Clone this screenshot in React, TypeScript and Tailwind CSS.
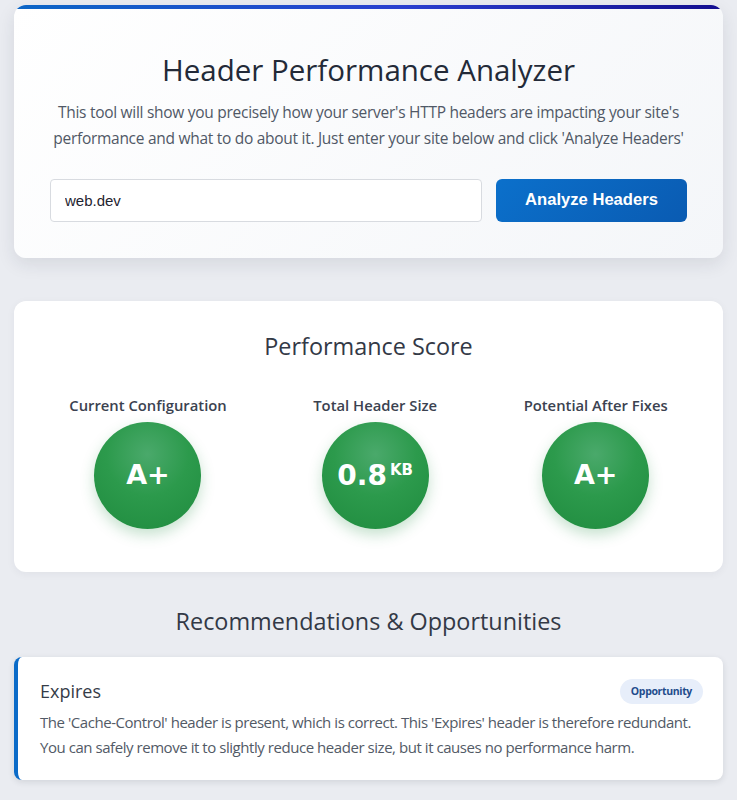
function Circle({ children }: { children: React.ReactNode }) {
  return (
    <div className="flex h-[107px] w-[107px] items-center justify-center rounded-full bg-[radial-gradient(circle_at_50%_30%,#4aa96b_0%,#2c9a4c_45%,#1f8b3e_100%)] shadow-[0_6px_14px_rgba(31,139,62,0.25)]">
      {children}
    </div>
  );
}

function Metric({ label, children }: { label: string; children: React.ReactNode }) {
  return (
    <div className="flex flex-col items-center gap-[7px]">
      <div className="text-[14.8px] font-semibold leading-[20px] text-[#3b4250]">{label}</div>
      <Circle>{children}</Circle>
    </div>
  );
}

export default function App() {
  return (
    <div className="min-h-[800px] bg-[#eaecf1] px-[14px] pt-[5px] pb-[20px] font-['Open_Sans',sans-serif]">
      {/* Analyzer card */}
      <div className="overflow-hidden rounded-[12px] bg-[linear-gradient(135deg,#ffffff_0%,#f4f6f9_100%)] shadow-[0_6px_18px_rgba(30,40,60,0.10)]">
        <div className="h-[4px] bg-[linear-gradient(90deg,#0b66c6_0%,#2a3fcf_55%,#120d8f_100%)]" />
        <div className="px-[36px] pt-[42px] pb-[36px]">
          <h1 className="text-center text-[29.5px] font-normal leading-[38px] text-[#232a38]">Header Performance Analyzer</h1>
          <p className="mt-[10px] text-center text-[15.5px] leading-[26px] tracking-[-0.28px] text-[#505866]">
            This tool will show you precisely how your server's HTTP headers are impacting your site's performance and what to do about it. Just enter your site below and click 'Analyze Headers'
          </p>
          <div className="mt-[28px] flex gap-[14px]">
            <input
              defaultValue="web.dev"
              className="h-[43px] flex-1 rounded-[4px] border border-[#d8dbe0] bg-white px-[14px] font-['Liberation_Sans',Arial,sans-serif] text-[15px] text-[#1f2430] outline-none"
            />
            <button className="h-[43px] w-[191px] rounded-[6px] bg-[linear-gradient(135deg,#0b70cb_0%,#0a5bb2_100%)] font-['Liberation_Sans',Arial,sans-serif] text-[16.6px] font-bold text-white">
              Analyze Headers
            </button>
          </div>
        </div>
      </div>

      {/* Performance score */}
      <div className="mt-[43px] rounded-[12px] bg-white px-[12px] pt-[29px] pb-[43px] shadow-[0_2px_8px_rgba(30,40,60,0.05)]">
        <h2 className="text-center text-[23.4px] font-normal leading-[32px] text-[#333946]">Performance Score</h2>
        <div className="mt-[33px] flex justify-around">
          <Metric label="Current Configuration">
            <span className="font-['DejaVu_Sans',sans-serif] text-[27px] font-bold text-white">A+</span>
          </Metric>
          <Metric label="Total Header Size">
            <span className="flex items-start font-['DejaVu_Sans',sans-serif] font-bold text-white">
              <span className="text-[28px] leading-[36px]">0.8</span>
              <span className="ml-[3px] mt-[4px] text-[15px] leading-[16px]">KB</span>
            </span>
          </Metric>
          <Metric label="Potential After Fixes">
            <span className="font-['DejaVu_Sans',sans-serif] text-[27px] font-bold text-white">A+</span>
          </Metric>
        </div>
      </div>

      {/* Recommendations */}
      <h2 className="mt-[33px] text-center text-[23.4px] font-normal leading-[32px] text-[#333946]">Recommendations &amp; Opportunities</h2>
      <div className="mt-[20px] rounded-[8px] border-l-[4px] border-[#0b6bc8] bg-white pl-[22px] pr-[20px] pt-[21px] pb-[20px] shadow-[0_2px_6px_rgba(30,40,60,0.12)]">
        <div className="flex items-center justify-between">
          <h3 className="text-[18px] font-normal leading-[26px] text-[#363c48]">Expires</h3>
          <span className="rounded-full bg-[#e7eefa] px-[11px] py-[4px] text-[10.5px] font-bold leading-[17px] tracking-[-0.35px] text-[#1f4c8c]">Opportunity</span>
        </div>
        <p className="mt-[6px] text-[15px] leading-[25px] tracking-[-0.45px] text-[#525a66]">
          The 'Cache-Control' header is present, which is correct. This 'Expires' header is therefore redundant. You can safely remove it to slightly reduce header size, but it causes no performance harm.
        </p>
      </div>
    </div>
  );
}
